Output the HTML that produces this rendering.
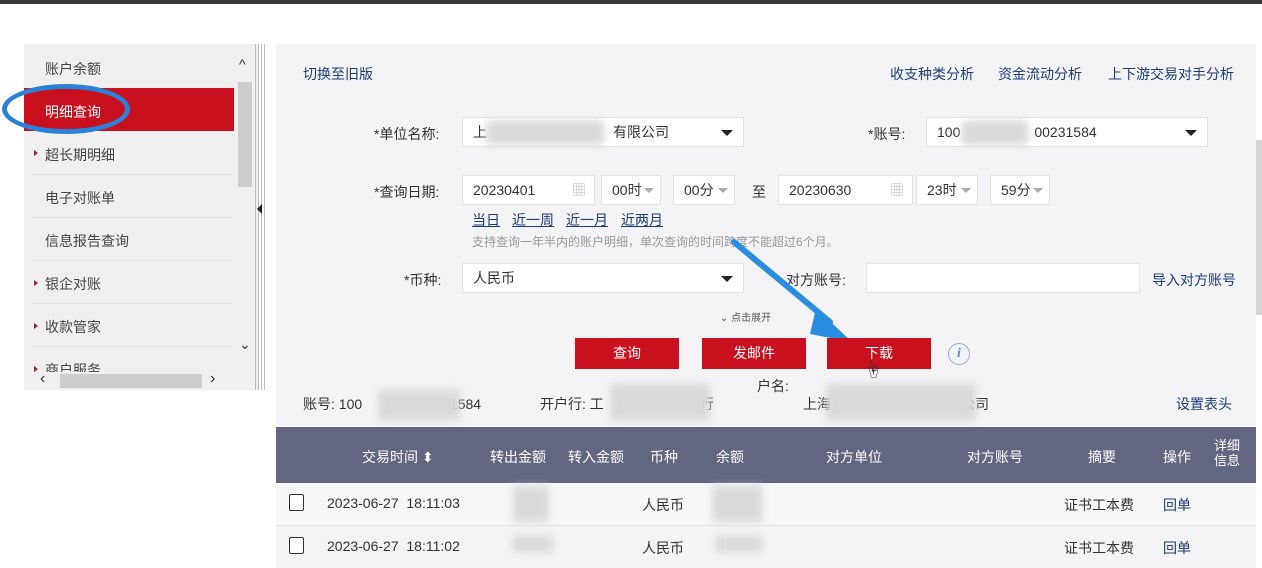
<!DOCTYPE html>
<html><head><meta charset="utf-8"><style>
body{margin:0;width:1262px;height:568px;background:#fff;position:relative;overflow:hidden;font-family:"Liberation Sans","Noto Sans CJK SC",sans-serif;color:#333;font-size:14px}
.a{position:absolute}
.t{position:absolute;white-space:nowrap}
.side{left:24px;top:44px;width:234px;height:346px;background:#f0f0f0}
.si{position:absolute;left:20px;font-size:14px;color:#444}
.sep{position:absolute;left:8px;width:200px;height:1px;background:#e2e2e2}
.tri{position:absolute;left:10px;width:0;height:0;border-left:4px solid #a02030;border-top:3px solid transparent;border-bottom:3px solid transparent}
.main{left:276px;top:44px;width:980px;height:524px;background:#f4f4f6}
.inp{position:absolute;background:#fff;border:1px solid #e3e3e3;height:30px;box-sizing:border-box;font-size:14px;line-height:28px;padding-left:10px;color:#333}
.dd{position:absolute;right:10px;top:12px;border-left:6px solid transparent;border-right:6px solid transparent;border-top:6px solid #222}
.sd{position:absolute;right:6px;top:12px;border-left:5px solid transparent;border-right:5px solid transparent;border-top:5px solid #aaa}
.btn{position:absolute;top:338px;width:104px;height:31px;background:#c8101e;color:#fff;text-align:center;line-height:31px;font-size:14px}
.blur{position:absolute;background:#d9d9dc;filter:blur(4px)}
.link{color:#1a3d7c}
.hd{position:absolute;top:427px;left:276px;width:980px;height:56px;background:#626681}
.h{position:absolute;color:#fff;font-size:14px;top:447px}
.cb{position:absolute;width:13px;height:15px;border:1.5px solid #333;border-radius:2px;background:#fff}
</style></head><body>
<div class="a" style="left:0;top:0;width:1262px;height:4px;background:#3a3a3a"></div>
<div class="a side"></div>
<div class="a" style="left:24px;top:88px;width:210px;height:43px;background:#c8101e"></div>
<div class="a" style="left:2px;top:84px;width:128px;height:50px;border:5px solid #2a82d8;border-radius:50%;box-sizing:border-box"></div>
<div class="si" style="left:45px;top:59px">账户余额</div>
<div class="si" style="left:45px;top:102px;color:#fff">明细查询</div>
<div class="tri" style="left:34px;top:150px"></div><div class="si" style="left:45px;top:145px">超长期明细</div>
<div class="sep" style="left:32px;top:174px"></div>
<div class="si" style="left:45px;top:188px">电子对账单</div>
<div class="sep" style="left:32px;top:217px"></div>
<div class="si" style="left:45px;top:231px">信息报告查询</div>
<div class="sep" style="left:32px;top:260px"></div>
<div class="tri" style="left:34px;top:280px"></div><div class="si" style="left:45px;top:274px">银企对账</div>
<div class="sep" style="left:32px;top:303px"></div>
<div class="tri" style="left:34px;top:323px"></div><div class="si" style="left:45px;top:317px">收款管家</div>
<div class="sep" style="left:32px;top:346px"></div>
<div class="tri" style="left:34px;top:366px"></div><div class="si" style="left:45px;top:360px;height:12px;overflow:hidden">商户服务</div>
<div class="a" style="left:24px;top:372px;width:234px;height:18px;background:#f0f0f0"></div>
<div class="a" style="left:60px;top:374px;width:142px;height:14px;background:#cdcdcd"></div>
<div class="t" style="left:40px;top:370px;font-size:16px">‹</div><div class="t" style="left:210px;top:370px;font-size:16px">›</div>
<div class="a" style="left:238px;top:82px;width:14px;height:105px;background:#cdcdcd"></div>
<div class="t" style="left:239px;top:56px;font-size:14px">^</div>
<div class="t" style="left:239px;top:336px;font-size:14px">⌄</div>
<div class="a" style="left:255px;top:44px;width:10px;height:346px;background:repeating-linear-gradient(90deg,#bbb 0 1px,transparent 1px 3px)"></div>
<div class="a" style="left:257px;top:204px;border-right:5px solid #222;border-top:5px solid transparent;border-bottom:5px solid transparent"></div>

<div class="a main"></div>
<div class="a" style="left:1256px;top:140px;width:6px;height:175px;background:#d4d4d4"></div>
<div class="t link" style="left:303px;top:64px">切换至旧版</div>
<div class="t link" style="left:890px;top:64px">收支种类分析</div>
<div class="t link" style="left:998px;top:64px">资金流动分析</div>
<div class="t link" style="left:1108px;top:64px">上下游交易对手分析</div>

<div class="t" style="left:374px;top:124px">*单位名称:</div>
<div class="inp" style="left:462px;top:117px;width:282px">上<span style="margin-left:126px">有限公司</span><div class="dd"></div></div>
<div class="blur" style="left:486px;top:121px;width:118px;height:24px"></div>
<div class="t" style="left:868px;top:124px">*账号:</div>
<div class="inp" style="left:926px;top:117px;width:282px">100<span style="margin-left:74px">00231584</span><div class="dd"></div></div>
<div class="blur" style="left:962px;top:121px;width:66px;height:24px"></div>

<div class="t" style="left:374px;top:182px">*查询日期:</div>
<div class="inp" style="left:462px;top:175px;width:133px">20230401<span style="position:absolute;right:8px;color:#bbb">▦</span></div>
<div class="inp" style="left:601px;top:175px;width:60px">00时<div class="sd"></div></div>
<div class="inp" style="left:673px;top:175px;width:62px">00分<div class="sd"></div></div>
<div class="t" style="left:752px;top:182px">至</div>
<div class="inp" style="left:778px;top:175px;width:135px">20230630<span style="position:absolute;right:8px;color:#bbb">▦</span></div>
<div class="inp" style="left:916px;top:175px;width:62px">23时<div class="sd"></div></div>
<div class="inp" style="left:990px;top:175px;width:60px">59分<div class="sd"></div></div>
<div class="t link" style="left:472px;top:210px;text-decoration:underline">当日</div>
<div class="t link" style="left:512px;top:210px;text-decoration:underline">近一周</div>
<div class="t link" style="left:566px;top:210px;text-decoration:underline">近一月</div>
<div class="t link" style="left:621px;top:210px;text-decoration:underline">近两月</div>
<div class="t" style="left:472px;top:233px;font-size:12px;color:#999">支持查询一年半内的账户明细，单次查询的时间跨度不能超过6个月。</div>

<div class="t" style="left:404px;top:270px">*币种:</div>
<div class="inp" style="left:462px;top:263px;width:282px">人民币<div class="dd"></div></div>
<div class="t" style="left:786px;top:270px">对方账号:</div>
<div class="inp" style="left:866px;top:263px;width:274px"></div>
<div class="t link" style="left:1152px;top:270px">导入对方账号</div>
<div class="t" style="left:720px;top:309px;font-size:10px;color:#555">⌄ 点击展开</div>

<svg class="a" style="left:730px;top:238px" width="130" height="110"><path d="M4 4 L100 84" stroke="#2a8ee0" stroke-width="6" stroke-linecap="round"/><path d="M86 70 L122 104 L80 96 Z" fill="#2a8ee0"/></svg>
<div class="btn" style="left:575px">查询</div>
<div class="btn" style="left:702px">发邮件</div>
<div class="btn" style="left:827px">下载</div>
<div class="t" style="left:864px;top:356px;font-size:18px">☝</div>
<div class="a" style="left:948px;top:343px;width:20px;height:20px;border:1.5px solid #8ab0e0;border-radius:50%;color:#5b8fd6;font-style:italic;text-align:center;line-height:20px;font-family:'Liberation Serif',serif;font-weight:bold">i</div>

<div class="t" style="left:757px;top:376px">户名:</div>
<div class="t" style="left:303px;top:394px">账号: 100<span style="margin-left:80px">31584</span></div>
<div class="blur" style="left:378px;top:390px;width:82px;height:30px"></div>
<div class="t" style="left:540px;top:394px">开户行: 工<span style="margin-left:96px">行</span></div>
<div class="blur" style="left:610px;top:384px;width:100px;height:36px"></div>
<div class="t" style="left:803px;top:394px">上海<span style="margin-left:130px">公司</span></div>
<div class="blur" style="left:826px;top:384px;width:150px;height:36px"></div>
<div class="t link" style="left:1176px;top:394px">设置表头</div>

<div class="hd"></div>
<div class="h" style="left:362px">交易时间 ⬍</div>
<div class="h" style="left:490px">转出金额</div>
<div class="h" style="left:568px">转入金额</div>
<div class="h" style="left:650px">币种</div>
<div class="h" style="left:716px">余额</div>
<div class="h" style="left:826px">对方单位</div>
<div class="h" style="left:967px">对方账号</div>
<div class="h" style="left:1088px">摘要</div>
<div class="h" style="left:1163px">操作</div>
<div class="t" style="left:1214px;top:438px;color:#fff;font-size:13px;line-height:15px;white-space:normal;width:30px">详细<br>信息</div>

<div class="a" style="left:276px;top:483px;width:980px;height:42px;background:#f7f7f8"></div>
<div class="a" style="left:276px;top:525px;width:980px;height:1px;background:#e4e4e4"></div>
<div class="cb" style="left:289px;top:494px"></div>
<div class="t" style="left:327px;top:495px">2023-06-27&nbsp; 18:11:03</div>
<div class="blur" style="left:513px;top:486px;width:36px;height:36px"></div>
<div class="t" style="left:642px;top:495px">人民币</div>
<div class="blur" style="left:712px;top:486px;width:50px;height:36px"></div>
<div class="t" style="left:1064px;top:495px">证书工本费</div>
<div class="t link" style="left:1163px;top:495px">回单</div>
<div class="cb" style="left:289px;top:537px"></div>
<div class="t" style="left:327px;top:538px">2023-06-27&nbsp; 18:11:02</div>
<div class="blur" style="left:513px;top:536px;width:40px;height:16px"></div>
<div class="t" style="left:642px;top:538px">人民币</div>
<div class="blur" style="left:716px;top:536px;width:46px;height:16px"></div>
<div class="t" style="left:1064px;top:538px">证书工本费</div>
<div class="t link" style="left:1163px;top:538px">回单</div>
</body></html>
